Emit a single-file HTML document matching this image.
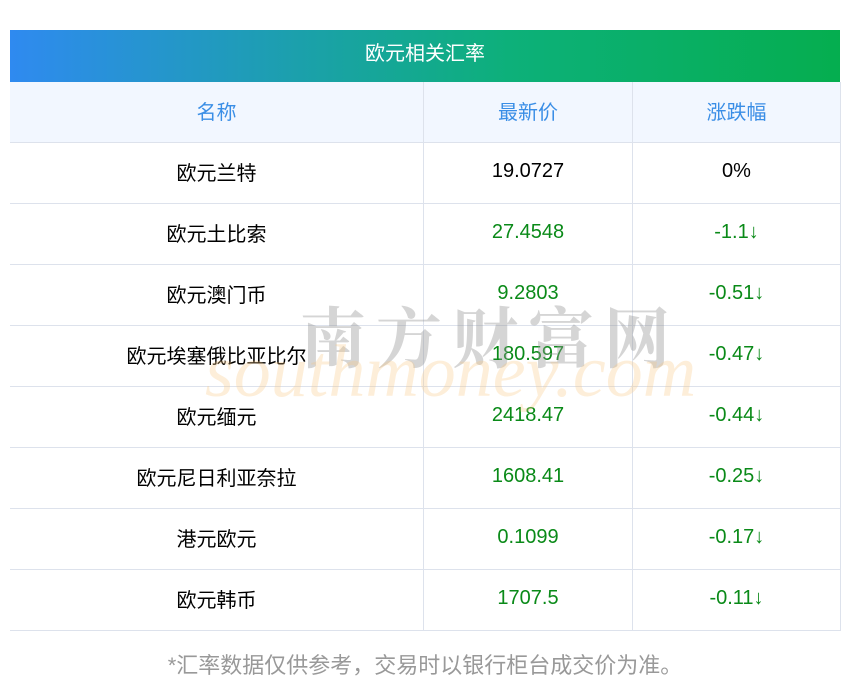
<!DOCTYPE html>
<html><head><meta charset="utf-8"><style>
body{margin:0;width:850px;height:697px;background:#fff;font-family:"Liberation Sans","Noto Sans CJK SC",sans-serif;position:relative;overflow:hidden}
.title{position:absolute;left:10px;top:30px;width:830px;height:52px;background:linear-gradient(90deg,#2f8af0,#0db07a 60%,#05ae4f);color:#fff;font-size:20px;text-align:center;line-height:48px}
table{position:absolute;left:10px;top:82px;width:831px;border-collapse:collapse;font-size:20px}
td,th{border:1px solid #dde2ec;text-align:center;height:56px;padding:0 0 4px;font-weight:normal}
tr:first-child th{border-top:none}
th{background:#f2f7ff;color:#3a8ee6}
td:first-child,th:first-child{border-left:none;width:413px}
td:last-child,th:last-child{width:207px}
.g{color:#0a8a18}
.note{position:absolute;top:648px;left:0;width:850px;text-align:center;color:#999;font-size:22px}
.wm1{position:absolute;left:300px;top:286px;font-size:66px;color:rgba(150,150,150,.4);letter-spacing:10px;font-weight:bold;font-family:"Noto Serif CJK SC",serif}
.wm2{position:absolute;left:205px;top:330px;font-size:74px;color:rgba(250,200,130,.3);font-style:italic;font-family:"Liberation Serif",serif}
</style></head><body>
<div class="title">欧元相关汇率</div>
<table>
<tr><th>名称</th><th>最新价</th><th>涨跌幅</th></tr>
<tr><td>欧元兰特</td><td>19.0727</td><td>0%</td></tr>
<tr><td>欧元土比索</td><td class="g">27.4548</td><td class="g">-1.1↓</td></tr>
<tr><td>欧元澳门币</td><td class="g">9.2803</td><td class="g">-0.51↓</td></tr>
<tr><td>欧元埃塞俄比亚比尔</td><td class="g">180.597</td><td class="g">-0.47↓</td></tr>
<tr><td>欧元缅元</td><td class="g">2418.47</td><td class="g">-0.44↓</td></tr>
<tr><td>欧元尼日利亚奈拉</td><td class="g">1608.41</td><td class="g">-0.25↓</td></tr>
<tr><td>港元欧元</td><td class="g">0.1099</td><td class="g">-0.17↓</td></tr>
<tr><td>欧元韩币</td><td class="g">1707.5</td><td class="g">-0.11↓</td></tr>
</table>
<div class="wm1">南方财富网</div>
<div class="wm2">southmoney.com</div>
<div class="note">*汇率数据仅供参考，交易时以银行柜台成交价为准。</div>
</body></html>
